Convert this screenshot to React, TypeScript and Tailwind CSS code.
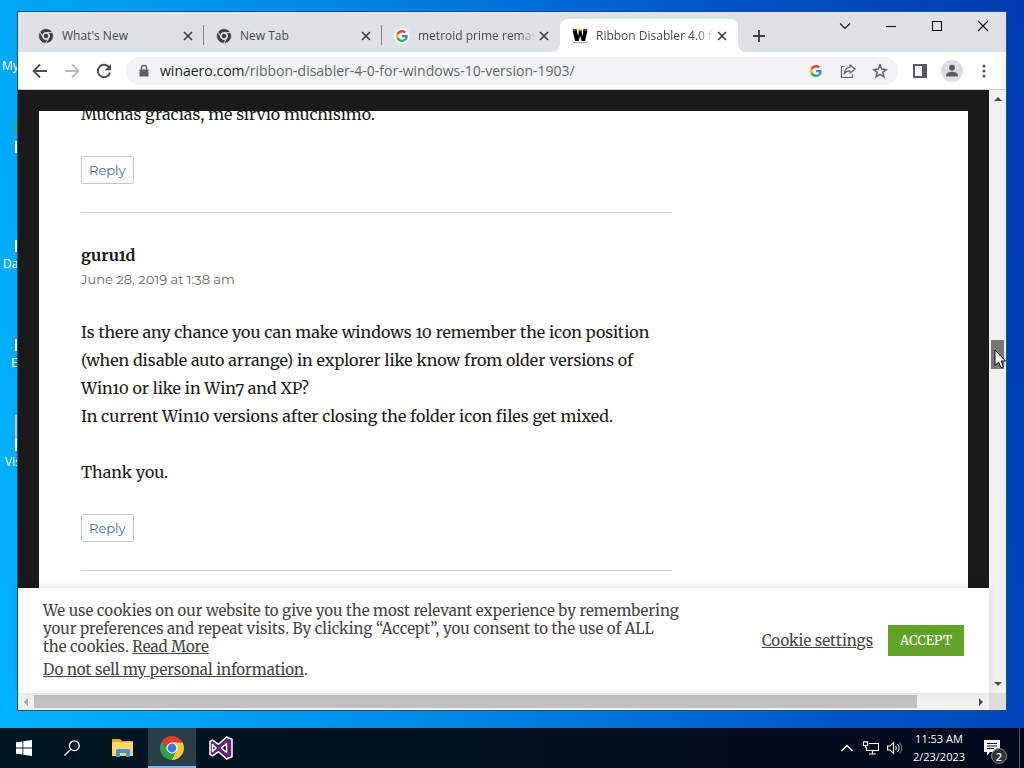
import type { ReactNode } from "react";

const UI_FONT = "font-['Segoe_UI','Open_Sans',sans-serif]";
const SERIF_FONT = "font-['Merriweather','DejaVu_Serif_Condensed','Liberation_Serif',serif]";
const SANS_FONT = "font-['Montserrat','Inter',sans-serif]";

const RED_ARM = "M12 6.55H22.69A12 12 0 0 0 1.94 5.47L7.28 14.73A5.45 5.45 0 0 1 12 6.55Z";
const YELLOW_ARM = "M22.69 6.55H12A5.45 5.45 0 0 1 16.72 14.73L11.37 23.98A12 12 0 0 0 22.69 6.55Z";
const GREEN_ARM = "M11.37 23.98L16.72 14.73A5.45 5.45 0 0 1 7.28 14.73L1.94 5.47A12 12 0 0 0 11.37 23.98Z";

function ChromeIcon() {
  return (
    <svg viewBox="0 0 24 24" className="size-6" aria-hidden="true">
      <circle cx="12" cy="12" r="7" fill="#fff" />
      <path d={RED_ARM} fill="#e33b2e" />
      <path d={YELLOW_ARM} fill="#fcc934" />
      <path d={GREEN_ARM} fill="#2ba24c" />
      <circle cx="12" cy="12" r="4.4" fill="#2f7de1" />
    </svg>
  );
}

function ChromeMonoIcon() {
  return (
    <svg viewBox="-1 -1 26 26" className="size-4 shrink-0" aria-hidden="true">
      <g fill="#3c4043" stroke="#dee1e6" strokeWidth="1.2">
        <path d={RED_ARM} />
        <path d={YELLOW_ARM} />
        <path d={GREEN_ARM} />
      </g>
      <circle cx="12" cy="12" r="6" fill="#dee1e6" />
      <circle cx="12" cy="12" r="3.8" fill="#3c4043" />
    </svg>
  );
}

function GoogleIcon({ className }: { className: string }) {
  return (
    <svg viewBox="0 0 48 48" className={className} aria-hidden="true">
      <path fill="#EA4335" d="M24 9.5c3.54 0 6.71 1.22 9.21 3.6l6.85-6.85C35.9 2.38 30.47 0 24 0 14.62 0 6.51 5.38 2.56 13.22l7.98 6.19C12.43 13.72 17.74 9.5 24 9.5z" />
      <path fill="#4285F4" d="M46.98 24.55c0-1.57-.15-3.09-.38-4.55H24v9.02h12.94c-.58 2.96-2.26 5.48-4.78 7.18l7.73 6c4.51-4.18 7.09-10.36 7.09-17.65z" />
      <path fill="#FBBC05" d="M10.53 28.59c-.48-1.45-.76-2.99-.76-4.59s.27-3.14.76-4.59l-7.98-6.19C.92 16.46 0 20.12 0 24c0 3.88.92 7.54 2.56 10.78l7.97-6.19z" />
      <path fill="#34A853" d="M24 48c6.48 0 11.93-2.13 15.89-5.81l-7.73-6c-2.15 1.45-4.92 2.3-8.16 2.3-6.26 0-11.57-4.22-13.47-9.91l-7.98 6.19C6.51 42.62 14.62 48 24 48z" />
    </svg>
  );
}

function WinaeroIcon() {
  return (
    <svg viewBox="0 0 16 16" className="size-4 shrink-0" aria-hidden="true">
      <path d="M1 1h4v3H1z" fill="#c9303a" />
      <path d="M6 1h4v3H6z" fill="#f0dc3a" />
      <path d="M11 1h4v3h-4z" fill="#3c50c8" />
      <path d="M0.5 2.5H5L6 8.5 7 2.5h2.4l1.1 6 1-6h4L13 13H9.6L8.2 7.5 6.8 13H3.2Z" fill="#000" />
      <path d="M1 14.5h14" stroke="#999" strokeWidth="1" strokeDasharray="2 .5" />
    </svg>
  );
}

function CloseGlyph() {
  return (
    <svg viewBox="0 0 10 10" className="size-2.5" aria-hidden="true">
      <path d="M1 1l8 8M9 1L1 9" stroke="#3c4043" strokeWidth="1.7" />
    </svg>
  );
}

function Tab({ icon, title, active, divider }: { icon: ReactNode; title: string; active?: boolean; divider?: boolean }) {
  return (
    <div
      role="tab"
      aria-selected={!!active}
      className={
        active
          ? "relative flex h-[33px] w-[178px] items-center rounded-t-lg bg-white pr-2 pl-3"
          : "relative flex h-[33px] w-[178px] items-center pr-2 pl-3"
      }
    >
      {icon}
      <span
        className={
          title.length > 12
            ? "ml-2 min-w-0 flex-1 overflow-hidden mask-r-from-85% text-xs whitespace-nowrap text-[#45494d]"
            : "ml-2 min-w-0 flex-1 overflow-hidden text-xs whitespace-nowrap text-[#45494d]"
        }
      >
        {title}
      </span>
      <button aria-label={`Close ${title}`} className="flex size-4 items-center justify-center">
        <CloseGlyph />
      </button>
      {divider && <span className="absolute top-1.5 right-0 h-5 w-px bg-[#808488]" />}
      {active && (
        <>
          <svg viewBox="0 0 8 8" className="absolute bottom-0 -left-2 size-2" aria-hidden="true">
            <path d="M8 0v8H0a8 8 0 0 0 8-8Z" fill="#fff" />
          </svg>
          <svg viewBox="0 0 8 8" className="absolute -right-2 bottom-0 size-2" aria-hidden="true">
            <path d="M0 0v8h8a8 8 0 0 1-8-8Z" fill="#fff" />
          </svg>
        </>
      )}
    </div>
  );
}

function CaptionButton({ label, children }: { label: string; children: ReactNode }) {
  return (
    <button aria-label={label} className="flex h-7 w-[46px] items-center justify-center">
      <svg viewBox="0 0 12 12" className="size-3" fill="none" stroke="#111" strokeWidth="1.1" aria-hidden="true">
        {children}
      </svg>
    </button>
  );
}

function TabStrip() {
  return (
    <div className="flex h-10 shrink-0 items-end bg-[#dee1e6] pl-2">
      <div role="tablist" className="flex">
        <Tab icon={<ChromeMonoIcon />} title="What's New" divider />
        <Tab icon={<ChromeMonoIcon />} title="New Tab" divider />
        <Tab
          icon={
            <span className="flex size-4 shrink-0 items-center justify-center rounded-full bg-white">
              <GoogleIcon className="size-3" />
            </span>
          }
          title="metroid prime remastered"
        />
        <Tab icon={<WinaeroIcon />} title="Ribbon Disabler 4.0 for Windows 10" active />
      </div>
      <button aria-label="New tab" className="ml-[7px] flex h-[33px] w-7 items-center justify-center">
        <svg viewBox="0 0 12 12" className="size-3" stroke="#3c4043" strokeWidth="1.9" aria-hidden="true">
          <path d="M6 0v12M0 6h12" />
        </svg>
      </button>
      <div className="ml-auto flex self-start">
        <CaptionButton label="Search tabs">
          <path d="M1 3.5l5 5 5-5" />
        </CaptionButton>
        <CaptionButton label="Minimize">
          <path d="M1 6.5h10" />
        </CaptionButton>
        <CaptionButton label="Maximize">
          <path d="M1.5 1.5h9v9h-9z" />
        </CaptionButton>
        <CaptionButton label="Close">
          <path d="M1 1l10 10M11 1L1 11" />
        </CaptionButton>
      </div>
    </div>
  );
}

function ToolButton({ label, children }: { label: string; children: ReactNode }) {
  return (
    <button aria-label={label} className="flex h-7 w-8 shrink-0 items-center justify-center">
      {children}
    </button>
  );
}

function Toolbar() {
  return (
    <div className="flex h-[37px] shrink-0 items-center bg-white px-1.5">
      <ToolButton label="Back">
        <svg viewBox="0 0 16 16" className="size-4" fill="none" stroke="#4a4d51" strokeWidth="1.8">
          <path d="M15 8H2M8 1.5L1.5 8 8 14.5" />
        </svg>
      </ToolButton>
      <ToolButton label="Forward">
        <svg viewBox="0 0 16 16" className="size-4" fill="none" stroke="#b9bbbe" strokeWidth="1.8">
          <path d="M1 8h13M8 1.5L14.5 8 8 14.5" />
        </svg>
      </ToolButton>
      <ToolButton label="Reload">
        <svg viewBox="0 0 16 16" className="size-4" fill="none" stroke="#4a4d51" strokeWidth="1.9">
          <path d="M13.3 4.7A6.2 6.2 0 1 0 14 9.5" />
          <path d="M15 1v6.3H8.7Z" fill="#4a4d51" stroke="none" />
        </svg>
      </ToolButton>
      <div className="ml-1.5 flex h-7 min-w-0 flex-1 items-center rounded-full bg-[#f1f3f4] pr-0.5 pl-3">
        <svg viewBox="0 0 12 14" className="h-3.5 w-3 shrink-0" aria-hidden="true">
          <path d="M1.5 5.5h9v7h-9z" fill="#5f6368" />
          <path d="M3.5 6V4a2.5 2.5 0 0 1 5 0v2" fill="none" stroke="#5f6368" strokeWidth="1.4" />
        </svg>
        <div
          role="textbox"
          aria-label="Address"
          contentEditable
          suppressContentEditableWarning
          className="ml-2.5 min-w-0 flex-1 overflow-hidden text-sm whitespace-nowrap text-[#62666a] outline-none"
        >
          <span className="text-[#202124]">winaero.com</span>/ribbon-disabler-4-0-for-windows-10-version-1903/
        </div>
        <ToolButton label="Search with Google">
          <GoogleIcon className="size-3" />
        </ToolButton>
        <ToolButton label="Share this page">
          <svg viewBox="0 0 16 16" className="size-4" fill="none" stroke="#5f6368" strokeWidth="1.2">
            <path d="M4.5 3.5H1.5v11h11v-3" />
            <path d="M10 1.8l5 4.2-5 4.2V7.9C7.4 7.9 5.5 8.7 4.3 10.8 4.6 7 6.5 4.6 10 4.2Z" strokeLinejoin="round" />
          </svg>
        </ToolButton>
        <ToolButton label="Bookmark this page">
          <svg viewBox="0 0 24 24" className="size-4" fill="none" stroke="#5f6368" strokeWidth="2.3">
            <path d="M12 3.2l2.7 6 6.5.6-4.9 4.3 1.4 6.4L12 17.1l-5.7 3.4 1.4-6.4-4.9-4.3 6.5-.6Z" />
          </svg>
        </ToolButton>
      </div>
      <div className="ml-1.5 flex">
        <ToolButton label="Side panel">
          <svg viewBox="0 0 14 14" className="size-3.5">
            <path d="M0 0h14v14H0zM2 2v10h7V2z" fill="#55585c" fillRule="evenodd" />
          </svg>
        </ToolButton>
        <ToolButton label="Profile">
          <svg viewBox="0 0 22 22" className="size-[22px]">
            <circle cx="11" cy="11" r="11" fill="#dcdde6" />
            <circle cx="11" cy="7.8" r="3" fill="#5a5b66" />
            <path d="M5 16.5v-1.5c0-2.2 4-3.2 6-3.2s6 1 6 3.2v1.5z" fill="#5a5b66" />
          </svg>
        </ToolButton>
        <ToolButton label="Menu">
          <svg viewBox="0 0 4 16" className="h-4 w-1" fill="#55585c">
            <circle cx="2" cy="3" r="1.6" />
            <circle cx="2" cy="8" r="1.6" />
            <circle cx="2" cy="13" r="1.6" />
          </svg>
        </ToolButton>
      </div>
    </div>
  );
}

function ReplyLink() {
  return (
    <a
      href="#respond"
      className={`inline-flex h-7 items-center rounded-xs border border-[#c8c8c8] px-[7px] text-[13px] font-normal text-[#3f6f96] ${SANS_FONT}`}
    >
      Reply
    </a>
  );
}

function Comments() {
  return (
    <main className="min-h-0 flex-1 overflow-hidden bg-[#1a1a1a] px-[21px] pt-[21px]">
      <div className={`h-full overflow-hidden bg-white px-[42px] text-base leading-7 oldstyle-nums text-[#1a1a1a] ${SERIF_FONT}`}>
        <div className="-mt-[11px] max-w-[591px]">
          <article className="flex flex-col items-start gap-7 border-b border-[#d1d1d1] pb-7">
            <p>Muchas gracias, me sirvió muchísimo.</p>
            <ReplyLink />
          </article>
          <article className="flex flex-col items-start gap-7 border-b border-[#d1d1d1] pt-7 pb-7">
            <header>
              <h3 className="text-base leading-7 font-bold">guru1d</h3>
              <p className={`text-[13px] leading-[21px] text-[#686868] ${SANS_FONT}`}>June 28, 2019 at 1:38 am</p>
            </header>
            <div className="whitespace-nowrap">
              <p>
                Is there any chance you can make windows 10 remember the icon position
                <br />
                (when disable auto arrange) in explorer like know from older versions of
                <br />
                Win10 or like in Win7 and XP?
                <br />
                In current Win10 versions after closing the folder icon files get mixed.
              </p>
              <p className="mt-7">Thank you.</p>
            </div>
            <ReplyLink />
          </article>
        </div>
      </div>
    </main>
  );
}

function CookieBar() {
  return (
    <section
      aria-label="Cookie consent"
      className={`relative flex shrink-0 items-center justify-between bg-white px-[25px] py-3.5 text-[15px] leading-[18px] text-[#444] shadow-[0_-1px_8px_rgba(0,0,0,0.12)] ${SERIF_FONT}`}
    >
      <div className="whitespace-nowrap">
        <p>
          We use cookies on our website to give you the most relevant experience by remembering
          <br />
          your preferences and repeat visits. By clicking “Accept”, you consent to the use of ALL
          <br />
          the cookies.{" "}
          <a href="#more" className="underline">
            Read More
          </a>
        </p>
        <p className="mt-[5px]">
          <a href="#privacy" className="underline">
            Do not sell my personal information
          </a>
          .
        </p>
      </div>
      <div className="flex shrink-0 items-center gap-[15px]">
        <button className="underline">Cookie settings</button>
        <button className="h-[31px] w-[76px] bg-[#61a229] text-[13px] text-white">ACCEPT</button>
      </div>
    </section>
  );
}

function VerticalScrollbar() {
  return (
    <div className="flex w-[17px] shrink-0 flex-col items-center justify-between bg-[#f1f1f1] py-[7px]">
      <svg viewBox="0 0 8 4" className="h-1 w-2" aria-hidden="true">
        <path d="M0 4l4-4 4 4z" fill="#505050" />
      </svg>
      <div className="mb-[75px] h-[29px] w-[13px] bg-[#787878]" />
      <svg viewBox="0 0 8 4" className="h-1 w-2" aria-hidden="true">
        <path d="M0 0h8L4 4z" fill="#505050" />
      </svg>
    </div>
  );
}

function HorizontalScrollbar() {
  return (
    <div className="flex h-[17px] shrink-0 items-center bg-[#f1f1f1]">
      <svg viewBox="0 0 4 8" className="mx-1.5 h-2 w-1" aria-hidden="true">
        <path d="M4 0v8L0 4z" fill="#a3a3a3" />
      </svg>
      <div className="flex-1">
        <div className="h-[13px] w-[94%] bg-[#c1c1c1]" />
      </div>
      <svg viewBox="0 0 4 8" className="mx-1.5 h-2 w-1" aria-hidden="true">
        <path d="M0 0v8l4-4z" fill="#505050" />
      </svg>
      <div className="h-full w-[17px] bg-[#dcdcdc]" />
    </div>
  );
}

const shortcuts = [
  { label: "My", place: "top-[57px] left-[2px]" },
  { label: "Data", place: "top-[255px] left-[3px]" },
  { label: "Edge", place: "top-[354px] left-[11px]" },
  { label: "Visual", place: "top-[453px] left-[5px]" },
];

const iconEdges = [
  "top-[122px] h-3 w-0.5 left-[15px] bg-[#36ad62]",
  "top-[141px] h-3 w-0.5 left-[15px] bg-[#eef4f8]",
  "top-[240px] h-3 w-0.5 left-[15px] bg-[#eef4f8]",
  "top-[339px] h-3 w-0.5 left-[15px] bg-[#eef4f8]",
  "top-[415px] h-6 w-0.5 left-[15px] bg-[#a9cfe0]",
  "top-[439px] h-3 w-0.5 left-[15px] bg-[#eef4f8]",
];

function Taskbar() {
  return (
    <footer className="flex h-10 shrink-0 items-center bg-linear-to-r from-[#001722] to-[#000a1b] text-white">
      <button aria-label="Start" className="flex h-full w-12 items-center justify-center">
        <svg viewBox="0 0 16 16" className="size-4" fill="#fff">
          <path d="M0 2.3l6.5-.9v6.1H0zM7.3 1.3L16 0v7.5H7.3zM0 8.4h6.5v6.2L0 13.7zM7.3 8.4H16V16l-8.7-1.3z" />
        </svg>
      </button>
      <button aria-label="Search" className="flex h-full w-12 items-center justify-center">
        <svg viewBox="0 0 16 16" className="size-4" fill="none" stroke="#fff" strokeWidth="1.3">
          <circle cx="10.3" cy="5.7" r="4.9" />
          <path d="M6.8 9.2L.5 15.5" />
        </svg>
      </button>
      <div className="ml-[3px] flex h-full gap-px">
        <button aria-label="File Explorer" className="flex h-full w-12 items-center justify-center">
          <svg viewBox="0 0 22 20" className="h-5 w-[22px]">
            <path d="M0 1h8l2 2h11v15H0z" fill="#e5a72e" />
            <path d="M1 4h20v14H0V5z" fill="#fbd669" />
            <path d="M4 19v-7l1-1h12l1 1v7h-4v-4H8v4z" fill="#4097d6" />
            <path d="M8 15h6v3H8z" fill="#fbd669" />
          </svg>
        </button>
        <button aria-label="Google Chrome" className="flex h-full w-12 items-center justify-center border-b-2 border-[#76b9ed] bg-[#2a3d48] pt-0.5">
          <ChromeIcon />
        </button>
        <button aria-label="Visual Studio" className="flex h-full w-12 items-center justify-center">
          <svg viewBox="0 0 24 24" className="size-6">
            <path
              d="M17.5 1L23 3.3v17.4L17.5 23 9.5 15.7 3.6 19.8 1 18.5v-13l2.6-1.3 5.9 4.1zM3.5 8.5v7L7 12zM17.5 7.5L12.5 12l5 4.5z"
              fill="#68217a"
              fillRule="evenodd"
              stroke="#fff"
              strokeWidth="1.5"
              strokeLinejoin="round"
            />
          </svg>
        </button>
      </div>
      <div className="ml-auto flex h-full items-center">
        <button aria-label="Show hidden icons" className="flex w-6 justify-center">
          <svg viewBox="0 0 12 8" className="h-2 w-3" fill="none" stroke="#fff" strokeWidth="1.4">
            <path d="M.5 7L6 1.5 11.5 7" />
          </svg>
        </button>
        <button aria-label="Network" className="flex w-6 justify-center">
          <svg viewBox="0 0 16 14" className="h-3.5 w-4" fill="none" stroke="#fff" strokeWidth="1.1">
            <path d="M6 2.5h9.5v7H3.5V6M9.5 9.5v3M6 13h7M.5.9h4v3.6h-4zM2.5 4.5V7" />
          </svg>
        </button>
        <button aria-label="Volume" className="flex w-6 justify-center">
          <svg viewBox="0 0 16 14" className="h-3.5 w-4" fill="none" stroke="#fff" strokeWidth="1.1">
            <path d="M.6 5v4h2.4L6.5 12.3V1.7L3 5z" />
            <path d="M8.5 5a3 3 0 0 1 0 4M10.5 3a6 6 0 0 1 0 8" />
            <path d="M12.7 1.5a9 9 0 0 1 0 11" stroke="#747d86" />
          </svg>
        </button>
        <div className="flex w-16 flex-col items-center text-[11px] leading-[18px] whitespace-nowrap">
          <time>11:53 AM</time>
          <time>2/23/2023</time>
        </div>
        <button aria-label="Notifications, 2 new" className="relative mr-1.5 flex h-full w-[42px] items-center justify-center">
          <svg viewBox="0 0 16 16" className="size-4">
            <path d="M0 0h16v12H6l-3 3.5V12H0z" fill="#fff" />
            <path d="M3 3.5h10M3 6h10M3 8.5h7" stroke="#000f20" strokeWidth="1" />
          </svg>
          <span className="absolute right-1.5 bottom-1 flex size-4 items-center justify-center rounded-full border border-[#858a90] bg-[#30343b] text-[11px] leading-none font-semibold">
            2
          </span>
        </button>
        <span className="mr-1 h-full w-px bg-[#4c5766]" />
      </div>
    </footer>
  );
}

export default function App() {
  return (
    <div
      className={`relative flex h-screen flex-col overflow-hidden bg-[linear-gradient(80deg,#00b4ff_0%,#00a2f5_18%,#0085e6_42%,#0055c8_74%,#003bb4_100%)] ${UI_FONT}`}
    >
      {shortcuts.map((s) => (
        <span key={s.label} className={`absolute text-xs leading-[18px] text-white ${s.place}`}>
          {s.label}
        </span>
      ))}
      {iconEdges.map((place) => (
        <span key={place} className={`absolute ${place}`} />
      ))}
      <div className="relative flex min-h-0 flex-1 flex-col px-[17px] pt-[11px] pb-[17px]">
        <div className="flex min-h-0 flex-1 flex-col border border-[#214e72] bg-white">
          <TabStrip />
          <Toolbar />
          <div className="flex min-h-0 flex-1 border-t border-[#c9cbce]">
            <div className="flex min-w-0 flex-1 flex-col">
              <Comments />
              <CookieBar />
            </div>
            <VerticalScrollbar />
          </div>
          <HorizontalScrollbar />
        </div>
      </div>
      <Taskbar />
      <svg viewBox="0 0 12 20" className="absolute top-[349px] left-[994px] h-5 w-3" aria-hidden="true">
        <path d="M1 1v15.5l3.6-3.4 2.4 5.6 2.5-1.1L7.1 12h4.4z" fill="#fff" stroke="#000" />
      </svg>
    </div>
  );
}
